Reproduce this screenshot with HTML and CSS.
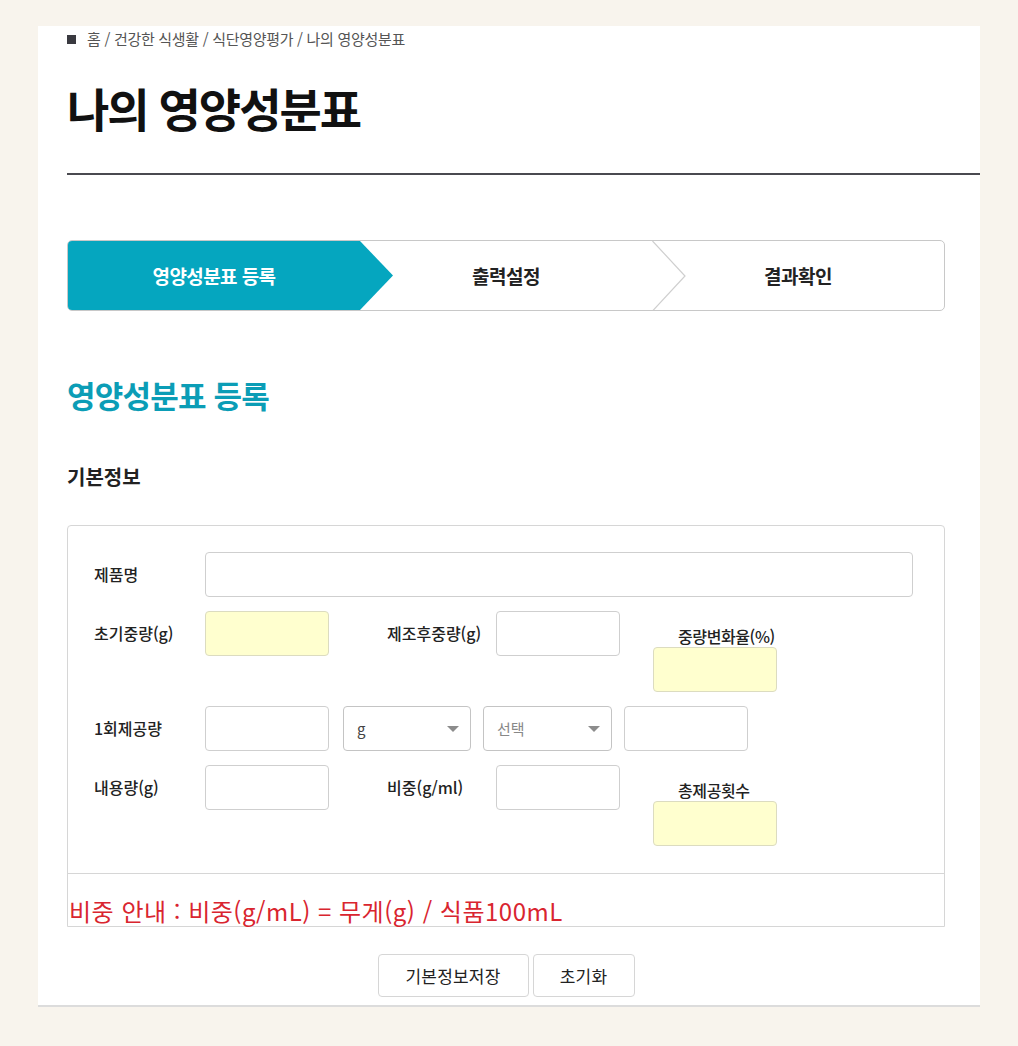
FILE: index.html
```html
<!DOCTYPE html>
<html lang="ko">
<head>
  <meta charset="UTF-8">
  <title>나의 영양성분표</title>
  <link rel="stylesheet" href="styles.css">
</head>
<body>

  <div class="page">
    <div class="breadcrumb"><span class="bullet"></span>홈 / 건강한 식생활 / 식단영양평가 / 나의 영양성분표</div>

    <h1 class="page-title">나의 영양성분표</h1>
    <hr class="title-line">

    <!-- 단계 표시 -->
    <ol class="steps">
      <li class="step active">영양성분표 등록</li>
      <li class="step">출력설정
        <svg class="chevron" width="34" height="70" viewBox="0 0 34 70">
          <polyline points="0.5,0 33,35 0.5,70" fill="none" stroke="#cfcfcf" stroke-width="1.2"/>
        </svg>
      </li>
      <li class="step">결과확인</li>
    </ol>

    <h2 class="section-title">영양성분표 등록</h2>
    <h3 class="sub-title">기본정보</h3>

    <div class="form-box">
      <div class="form-body">
        <div class="row">
          <label class="label">제품명</label>
          <input class="field wide" type="text">
        </div>

        <div class="row">
          <label class="label">초기중량(g)</label>
          <input class="field auto" type="text" readonly>
          <label class="label mid">제조후중량(g)</label>
          <input class="field" type="text">
          <div class="stack">
            <span class="stack-label">중량변화율(%)</span>
            <input class="field auto" type="text" readonly>
          </div>
        </div>

        <div class="row">
          <label class="label">1회제공량</label>
          <input class="field" type="text">
          <div class="select unit">
            <select>
              <option>g</option>
              <option>ml</option>
            </select>
          </div>
          <div class="select kind">
            <select class="placeholder">
              <option>선택</option>
            </select>
          </div>
          <input class="field last" type="text">
        </div>

        <div class="row">
          <label class="label">내용량(g)</label>
          <input class="field" type="text">
          <label class="label mid">비중(g/ml)</label>
          <input class="field" type="text">
          <div class="stack">
            <span class="stack-label">총제공횟수</span>
            <input class="field auto" type="text" readonly>
          </div>
        </div>
      </div>

      <p class="notice">비중 안내 : 비중(g/mL) = 무게(g) / 식품100mL</p>
    </div>

    <div class="actions">
      <button class="btn save">기본정보저장</button>
      <button class="btn">초기화</button>
    </div>
  </div>

</body>
</html>
```

FILE: styles.css
```css
body {
  margin: 0;
  background-color: #f8f4ed;
  font-family: "Noto Sans CJK KR", "Noto Sans", sans-serif;
  color: #222;
}

.page {
  background: white;
  margin: 26px 38px 0 38px;
  padding: 3px 35px 8px 29px;
  border-bottom: 2px solid #dcdcdc;
  box-shadow: 0 3px 0 #f0efee;
}

.breadcrumb {
  display: flex;
  align-items: center;
  font-size: 15px;
  line-height: 20px;
  color: #555;
  letter-spacing: -0.3px;
}

.bullet {
  width: 9px;
  height: 9px;
  background: #3a3a40;
  margin-right: 11px;
}

.page-title {
  margin: 31px 0 0 0;
  font-size: 46px;
  line-height: 55px;
  font-weight: 700;
  color: #111;
  letter-spacing: -2px;
}

.title-line {
  margin: 38px -35px 0 0;
  border: none;
  border-top: 2px solid #4a4a50;
  height: 0;
}

.steps {
  list-style: none;
  margin: 65px 0 0 0;
  padding: 0;
  display: flex;
  height: 69px;
  border: 1px solid #c8c8c8;
  border-radius: 5px;
  overflow: hidden;
}

.step {
  flex: 1;
  position: relative;
  display: flex;
  align-items: center;
  justify-content: center;
  font-size: 19px;
  font-weight: 700;
  letter-spacing: -0.5px;
  color: #222;
}

.step.active {
  background: #05a6bf;
  color: white;
  letter-spacing: -0.6px;
  z-index: 1;
}

.step.active::after {
  content: "";
  position: absolute;
  top: 0;
  right: -33px;
  width: 33px;
  height: 100%;
  background: #05a6bf;
  clip-path: polygon(0 0, 100% 50%, 0 100%);
}

.chevron {
  position: absolute;
  top: -0.5px;
  right: -34px;
  z-index: 1;
}

.section-title {
  margin: 64px 0 0 0;
  font-size: 31px;
  line-height: 40px;
  font-weight: 700;
  color: #0b9db6;
  letter-spacing: -0.8px;
}

.sub-title {
  margin: 49px 0 0 0;
  font-size: 20px;
  line-height: 26px;
  font-weight: 700;
  color: #222;
  letter-spacing: 0;
}

.form-box {
  margin-top: 35px;
  border: 1px solid #d6d6d6;
  border-radius: 4px 4px 0 0;
}

.form-body {
  padding: 26px 31px 27px 26px;
  border-bottom: 1px solid #d6d6d6;
  display: flex;
  flex-direction: column;
  gap: 14px;
}

.row {
  display: flex;
  align-items: flex-start;
}

.label {
  width: 111px;
  flex: none;
  line-height: 45px;
  font-size: 16px;
  font-weight: 500;
  color: #222;
  white-space: nowrap;
}

.label.mid {
  width: 109px;
  margin-left: 58px;
}

.field {
  width: 124px;
  height: 45px;
  box-sizing: border-box;
  border: 1px solid #cfcfcf;
  border-radius: 4px;
  background: white;
  padding: 0 10px;
  font-size: 15px;
  font-family: inherit;
  flex: none;
}

.field.wide {
  flex: 1;
  width: auto;
}

.field.auto {
  background: #ffffcf;
  border-color: #dcdcc0;
}

.field.last {
  margin-left: 12px;
}

.stack {
  margin-left: 33px;
  width: 124px;
  display: flex;
  flex-direction: column;
  padding-top: 15px;
}

.stack-label {
  font-size: 16px;
  line-height: 20px;
  font-weight: 500;
  letter-spacing: -0.4px;
  margin: 0 0 1px 25px;
  white-space: nowrap;
}

.select {
  position: relative;
  flex: none;
}

.select.unit {
  width: 128px;
  margin-left: 14px;
}

.select.kind {
  width: 129px;
  margin-left: 12px;
}

.select select {
  width: 100%;
  height: 45px;
  -webkit-appearance: none;
  appearance: none;
  border: 1px solid #c4c4c4;
  border-radius: 4px;
  background: white;
  padding: 0 13px;
  font-size: 15px;
  font-family: inherit;
  color: #444;
}

.select select.placeholder {
  color: #888;
}

.select::after {
  content: "";
  position: absolute;
  right: 12px;
  top: 20px;
  border-left: 6px solid transparent;
  border-right: 6px solid transparent;
  border-top: 6px solid #8c8c8c;
  pointer-events: none;
}

.notice {
  margin: 0;
  padding: 22px 0 0 1px;
  font-size: 24px;
  line-height: 30px;
  color: #d9252f;
  letter-spacing: 0.5px;
}

.actions {
  margin-top: 27px;
  display: flex;
  justify-content: center;
  gap: 4px;
}

.btn {
  height: 43px;
  width: 102px;
  border: 1px solid #d6d6d6;
  border-radius: 4px;
  background: white;
  font-family: inherit;
  font-size: 17px;
  color: #222;
  letter-spacing: 0.2px;
  cursor: pointer;
}

.btn.save {
  width: 151px;
}
```
